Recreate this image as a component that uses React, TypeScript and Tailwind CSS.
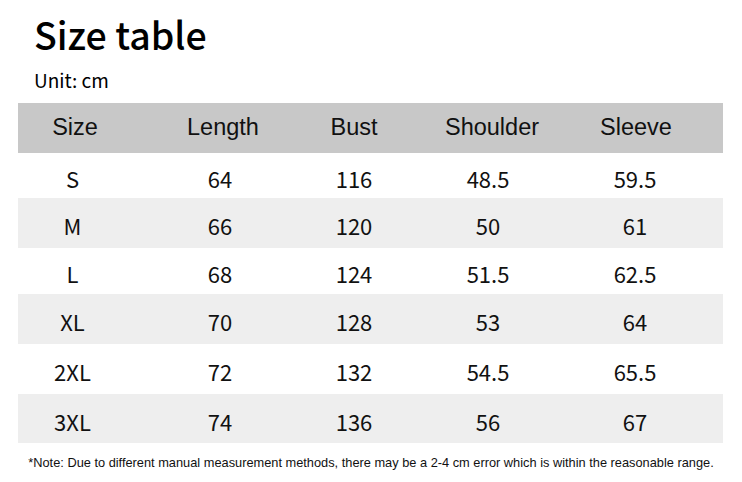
import React from 'react';

// size chart, cm
const rows = [
  { size: 'S', length: '64', bust: '116', shoulder: '48.5', sleeve: '59.5', h: 'h-[45px]' },
  { size: 'M', length: '66', bust: '120', shoulder: '50', sleeve: '61', h: 'h-[50px]' },
  { size: 'L', length: '68', bust: '124', shoulder: '51.5', sleeve: '62.5', h: 'h-[46px]' },
  { size: 'XL', length: '70', bust: '128', shoulder: '53', sleeve: '64', h: 'h-[50px]' },
  { size: '2XL', length: '72', bust: '132', shoulder: '54.5', sleeve: '65.5', h: 'h-[50px]' },
  { size: '3XL', length: '74', bust: '136', shoulder: '56', sleeve: '67', h: 'h-[49px]' },
];

const headers = ['Size', 'Length', 'Bust', 'Shoulder', 'Sleeve'];

const App = () => {
  return (
    <div className="w-[742px] h-[482px] bg-white overflow-hidden">
      <div className="pl-[34px] pt-[10px]">
        <h1 className="text-[37.5px] leading-[48px] font-medium text-black font-['Noto_Sans_CJK_SC',sans-serif]">
          Size table
        </h1>
        <p className="mt-[10px] text-[19px] leading-[24px] text-black font-['Noto_Sans_CJK_SC',sans-serif]">
          Unit: cm
        </p>
      </div>

      <div className="mx-[18px] mt-[11px] w-[705px]">
        <div className="grid grid-cols-[114px_182px_80px_196px_92px] h-[50px] items-center bg-[#c8c8c8] text-[23.5px] text-[#111] font-['Liberation_Sans',Arial,sans-serif]">
          {headers.map((h) => (
            <div key={h} className="text-center">
              {h}
            </div>
          ))}
        </div>

        {rows.map((r, i) => (
          <div
            key={r.size}
            className={`grid grid-cols-[109px_186px_82px_186px_108px] items-center pt-[5px] text-[22px] text-[#111] font-['Noto_Sans_CJK_SC',sans-serif] ${r.h} ${i % 2 === 1 ? 'bg-[#eeeeee]' : 'bg-white'}`}
          >
            <div className="text-center">{r.size}</div>
            <div className="text-center">{r.length}</div>
            <div className="text-center">{r.bust}</div>
            <div className="text-center">{r.shoulder}</div>
            <div className="text-center">{r.sleeve}</div>
          </div>
        ))}
      </div>

      <p className="mt-[10px] text-center text-[12.8px] text-[#111] font-['Liberation_Sans',Arial,sans-serif]">
        *Note: Due to different manual measurement methods, there may be a 2-4 cm error which is within the reasonable range.
      </p>
    </div>
  );
};

export default App;
